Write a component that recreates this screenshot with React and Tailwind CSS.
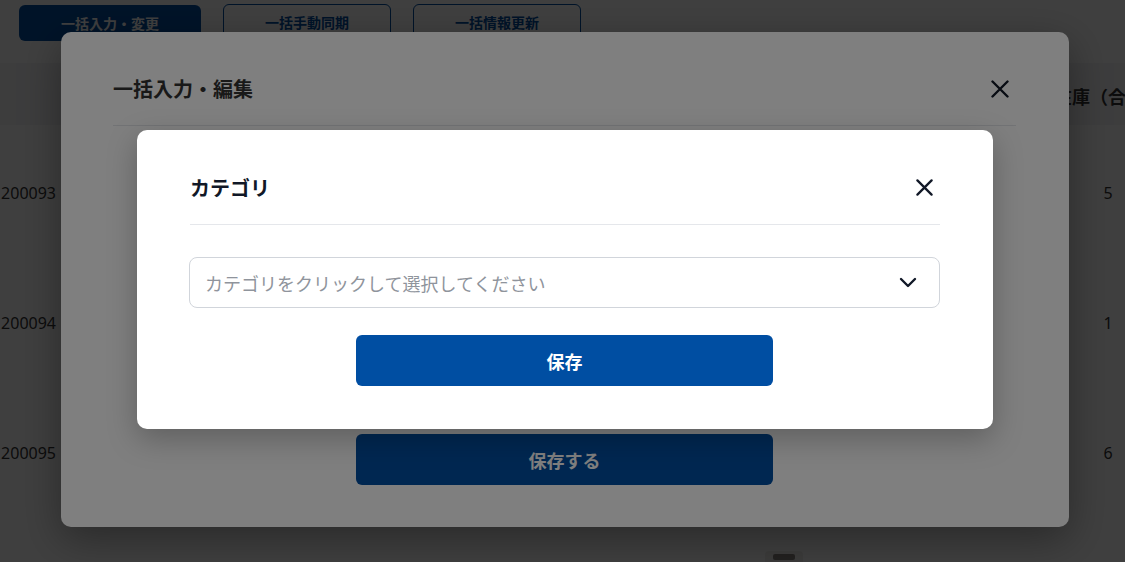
import React from "react";

const XIcon = ({ size = 18 }) => (
  <svg width={size} height={size} viewBox="0 0 18 18" fill="none">
    <path d="M1.5 1.5 16.5 16.5M16.5 1.5 1.5 16.5" stroke="#111827" strokeWidth="2.4" strokeLinecap="round" />
  </svg>
);

const Chevron = () => (
  <svg width="18" height="11" viewBox="0 0 18 11" fill="none">
    <path d="M2 2 9 9 16 2" stroke="#111827" strokeWidth="2.4" strokeLinecap="round" strokeLinejoin="round" />
  </svg>
);

const rows = [
  { id: "200093", qty: "5" },
  { id: "200094", qty: "1" },
  { id: "200095", qty: "6" },
];

export default function App() {
  return (
    <div className="relative w-[1125px] h-[562px] overflow-hidden bg-white font-['Noto_Sans','Noto_Sans_CJK_JP',sans-serif]">
      {/* background page */}
      <div className="flex gap-[22px] pl-[19px] pt-[4px]">
        <button className="mt-[1px] h-[36px] w-[182px] rounded-[6px] bg-[#004ea2] text-[14px] font-bold text-white">
          一括入力・変更
        </button>
        <button className="h-[37px] w-[168px] rounded-[6px] border border-[#004ea2] text-[14px] font-bold text-[#004ea2]">
          一括手動同期
        </button>
        <button className="h-[37px] w-[168px] rounded-[6px] border border-[#004ea2] text-[14px] font-bold text-[#004ea2]">
          一括情報更新
        </button>
      </div>
      <div className="mt-[22px]">
        <div className="flex h-[62px] items-center bg-[#f4f5f7] pt-[6px]">
          <div className="ml-auto w-[114px] shrink-0 whitespace-nowrap text-center text-[18px] font-bold text-[#333] -mr-[40px]">
            在庫（合計）
          </div>
        </div>
        {rows.map((r) => (
          <div key={r.id} className="flex h-[130px] items-center pt-[6px] text-[16px] text-[#333]">
            <div className="w-[56px] shrink-0 text-right">{r.id}</div>
            <div className="ml-auto w-[34px] shrink-0 text-center">{r.qty}</div>
          </div>
        ))}
        <div className="flex">
          <div className="ml-[765px] mt-[36px] flex h-[40px] w-[38px] justify-center rounded-[4px] bg-[#f0efed] pt-[3px]">
            <div className="h-[6px] w-[22px] rounded-[2px] bg-[#8a8580]" />
          </div>
        </div>
      </div>

      {/* overlay 1 */}
      <div className="absolute inset-0 bg-[rgba(0,0,0,0.5)]" />

      {/* modal 1 */}
      <div className="absolute left-[61px] top-[32px] flex h-[495px] w-[1008px] flex-col rounded-[10px] bg-white pl-[52px] pr-[53px] shadow-[0_12px_40px_rgba(0,0,0,0.35)]">
        <div className="mt-[38px] flex h-[38px] items-center justify-between">
          <h2 className="pt-[2px] text-[20px] font-bold text-[#333]">一括入力・編集</h2>
          <div className="mr-[7px]">
            <XIcon />
          </div>
        </div>
        <div className="mt-[17px] h-px bg-[#e5e7eb]" />
        <div className="flex-1" />
        <button className="mx-auto mb-[42px] h-[51px] w-[417px] rounded-[6px] bg-[#004ea2] pt-[3px] text-[18px] font-bold text-white">
          保存する
        </button>
      </div>

      {/* overlay 2 */}
      <div className="absolute inset-0 bg-[rgba(0,0,0,0.5)]" />

      {/* modal 2 */}
      <div className="absolute left-[137px] top-[130px] flex h-[299px] w-[856px] flex-col rounded-[10px] bg-white pl-[52px] pr-[53px] shadow-[0_10px_30px_rgba(0,0,0,0.25)]">
        <div className="mt-[38px] flex h-[38px] items-center justify-between">
          <h3 className="pl-[1px] pt-[3px] text-[20px] font-bold text-[#111827]">カテゴリ</h3>
          <div className="mr-[7px]">
            <XIcon size={17} />
          </div>
        </div>
        <div className="ml-[1px] mt-[18px] h-px bg-[#e5e7eb]" />
        <div className="mt-[32px] flex h-[51px] items-center justify-between rounded-[8px] border border-[#d1d5db] pl-[15px] pr-[22px]">
          <span className="pt-[3px] text-[18px] text-[#8f949c]">カテゴリをクリックして選択してください</span>
          <Chevron />
        </div>
        <button className="mx-auto mt-[27px] h-[51px] w-[417px] rounded-[6px] bg-[#004ea2] pt-[3px] text-[18px] font-bold text-white">
          保存
        </button>
      </div>
    </div>
  );
}
